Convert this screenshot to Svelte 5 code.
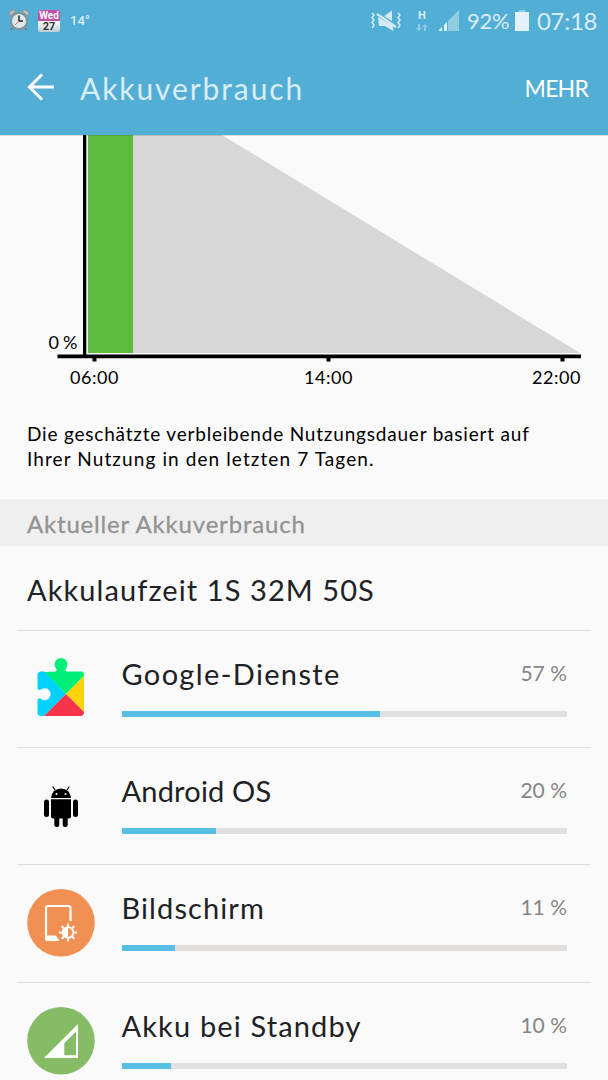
<script lang="ts">
    type Consumer = {
        id: string;
        name: string;
        percent: number;
        fill: number;
        spacing: number;
    };

    const consumers: Consumer[] = [
        { id: 'google', name: 'Google-Dienste', percent: 57, fill: 58.1, spacing: 1.35 },
        { id: 'android', name: 'Android OS', percent: 20, fill: 21.1, spacing: 0.2 },
        { id: 'screen', name: 'Bildschirm', percent: 11, fill: 12.1, spacing: 1.1 },
        { id: 'standby', name: 'Akku bei Standby', percent: 10, fill: 11.1, spacing: 1.15 }
    ];

    const ticks = [
        { x: 94.5, start: 70, label: '06:00' },
        { x: 328.5, start: 304, label: '14:00' },
        { x: 562.5, start: 532, label: '22:00' }
    ];

    const rays = [0, 45, 90, 135, 180, 225, 270, 315];
</script>

<div class="screen">
    <header>
        <div class="status">
            <svg class="alarm" width="20" height="23" viewBox="0 0 20 23">
                <path d="M4 19l-2 2M16 19l2 2" stroke="#777c80" stroke-width="2" />
                <path d="M1 7a4 4 0 0 1 6-5zM19 7a4 4 0 0 0-6-5z" fill="#c7c4bd" stroke="#85898c" stroke-width=".7" />
                <circle cx="10" cy="12" r="8" fill="#dce9ed" stroke="#8b9093" stroke-width="2" />
                <path d="M10 6.5V12h4" fill="none" stroke="#222" stroke-width="1.5" />
                <path d="M10 12l-4 4" stroke="#e06070" stroke-width="1" />
            </svg>
            <div class="calendar">
                <span class="weekday">Wed</span>
                <span class="day">27</span>
            </div>
            <span class="temp">14°</span>
            <svg class="mute" width="32" height="22" viewBox="0 0 32 22" fill="none" stroke="#d5ebf5">
                <path d="M2 3l2 2-2 2.5 2 2.5-2 2.5 2 2.5-2 3M28 3l2 2-2 2.5 2 2.5-2 2.5 2 2.5-2 3" stroke-width="1.4" />
                <path d="M14 6l8-5.5V11zM8 7l15 9v5l-8-5H9z" fill="#d5ebf5" stroke="none" />
                <path d="M7 4l19 13" stroke-width="2.2" />
            </svg>
            <div class="network">
                <span>H</span>
                <svg width="12" height="7" viewBox="0 0 12 7" fill="#91cce5">
                    <path d="M2 0h2v4h2L3 7 0 4h2zM8 7h2V3h2L9 0 6 3h2z" />
                </svg>
            </div>
            <svg class="signal" width="22" height="21" viewBox="0 0 22 21">
                <path d="M10 11L21 0v21H10z" fill="#91cce5" />
                <path d="M1 20l3-3v4H1zM6 15l3-3v9H6z" fill="#e1f1f8" />
            </svg>
            <span class="level">92%</span>
            <svg class="battery" width="14" height="21" viewBox="0 0 14 21">
                <path d="M4 0h6v2H4z" fill="#91cce5" />
                <path d="M0 2h14v19H0z" fill="#e4f1f8" />
            </svg>
            <span class="clock">07:18</span>
        </div>
        <div class="toolbar">
            <svg width="28" height="28" viewBox="0 0 28 28" fill="none" stroke="#fff" stroke-width="3">
                <path d="M15 1.5L2.5 14 15 26.5M2.5 14H27" />
            </svg>
            <h1>Akkuverbrauch</h1>
            <span class="more">MEHR</span>
        </div>
    </header>

    <svg class="chart" width="608" height="265" viewBox="0 135 608 265">
        <path d="M133 135h89L580 353H133z" fill="#d7d7d7" />
        <path d="M88 135h45v218H88z" fill="#5dbb3d" />
        <path d="M83 135h3.3v220H83zM57.5 354.5H581v3.7H57.5z" />
        <path d="M0 135h608v1H0z" fill="#000" opacity=".12" />
        <text x="48.5" y="349" textLength="29">0 %</text>
        {#each ticks as tick}
            <rect x={tick.x - 2} y="358" width="4" height="3.5" />
            <text x={tick.start} y="384" textLength="48.5">{tick.label}</text>
        {/each}
    </svg>

    <p class="note">
        <span>Die geschätzte verbleibende Nutzungsdauer basiert auf</span><br />
        <span class="second">Ihrer Nutzung in den letzten 7 Tagen.</span>
    </p>

    <h2>Aktueller Akkuverbrauch</h2>
    <div class="runtime">Akkulaufzeit 1S 32M 50S</div>

    <ul>
        {#each consumers as item (item.id)}
            <li>
                <svg class="icon" width="68" height="68" viewBox="0 0 68 68">
                    {#if item.id === 'google'}
                        <path d="M17.5 17L39 39l18-18v-1.500a3 3 0 0 0-3-3H39.500c-1.500-.5-1.500-2.500-.2-3.500a6.400 6.400 0 1 0-10.600 0c1.300 1 1.300 3 0 3.500z" fill="#00ef76" />
                        <path d="M17.500 16.500H14a3.500 3.500 0 0 0-3.500 3.500V33c0 2 2 2.500 3.500 1.500a6 6 0 1 1 0 9.500c-1.500-1-3.500-.5-3.500 1.500v12A3.500 3.500 0 0 0 14 61h3L39 39z" fill="#00d2ff" />
                        <path d="M57 21L39 39l18 18z" fill="#ffd20a" />
                        <path d="M39 39L17 61h36.500a3.500 3.500 0 0 0 3.500-4z" fill="#f63448" />
                    {:else if item.id === 'android'}
                        <g transform="translate(0 -6)">
                            <path d="M24 32a10 9.500 0 0 1 20 0z" />
                            <path d="M28 24l-2-3M40 24l2-3" stroke="#000" stroke-width="1.300" stroke-linecap="round" />
                            <circle cx="29.500" cy="28" r="1" fill="#fafafa" />
                            <circle cx="38.500" cy="28" r="1" fill="#fafafa" />
                            <path d="M24 33.200h20V50.500a2 2 0 0 1-2 2H26a2 2 0 0 1-2-2z" />
                            <rect x="17" y="33.500" width="5" height="17.500" rx="2.500" />
                            <rect x="46" y="33.500" width="5" height="17.500" rx="2.500" />
                            <rect x="27.300" y="46" width="5" height="15" rx="2.500" />
                            <rect x="35.700" y="46" width="5" height="15" rx="2.500" />
                        </g>
                    {:else if item.id === 'screen'}
                        <circle cx="34" cy="33.800" r="33.800" fill="#f09052" />
                        <path d="M43.500 32V19a2 2 0 0 0-2-2H21a2 2 0 0 0-2 2v30.500a1.500 1.500 0 0 0 1.500 1.500H31" fill="none" stroke="#fff" stroke-width="2.200" />
                        <path d="M19 46.500h10l3.500 5.500H20z" fill="#fff" />
                        <g stroke="#fff" stroke-width="2">
                            {#each rays as angle}
                                <path d="M41 34.500v3" transform="rotate({angle} 41 43.500)" />
                            {/each}
                            <circle cx="41" cy="43.500" r="5.300" fill="none" stroke-width="1.800" />
                        </g>
                        <path d="M41 38a5.500 5.500 0 0 0 0 11z" fill="#fff" />
                    {:else}
                        <circle cx="34" cy="33.800" r="33.800" fill="#87bc66" />
                        <path d="M51 17v34H17zM49 24.500L37.300 36v12.300H49z" fill="#fff" fill-rule="evenodd" />
                    {/if}
                </svg>
                <div class="details">
                    <div class="line">
                        <span class="name" style="letter-spacing: {item.spacing}px">{item.name}</span>
                        <span class="percent">{item.percent} %</span>
                    </div>
                    <div class="track">
                        <div class="fill" style="width: {item.fill}%"></div>
                    </div>
                </div>
            </li>
        {/each}
    </ul>
</div>

<style>
    :global(body) {
        margin: 0;
        background: #fafafa;
    }

    .screen {
        height: 1080px;
        overflow: hidden;
        background: #fafafa;
        color: #202124;
        font-family: "Choco Cooky", Lato, sans-serif;
    }

    svg {
        display: block;
        flex: none;
    }

    header {
        height: 135px;
        background: #52aed5;
    }

    .status {
        display: flex;
        align-items: center;
        height: 41px;
        padding: 0 10px 0 9px;
        color: #d9edf6;
        white-space: nowrap;
    }

    .calendar {
        display: flex;
        flex-direction: column;
        width: 22px;
        height: 22px;
        margin-left: 9px;
        overflow: hidden;
        border-radius: 2px;
        background: linear-gradient(#d6e8f0, #f5f8fa 60%, #b9cbd2);
        text-align: center;
        font-family: Roboto, sans-serif;
        font-weight: 700;
    }

    .weekday {
        height: 11px;
        background: #c14fa5;
        color: #fff;
        font-size: 10px;
        line-height: 11px;
    }

    .day {
        color: #333;
        font-size: 11px;
        line-height: 11px;
    }

    .temp {
        margin: 0 auto 0 10px;
        font: 500 13px/20px Roboto, sans-serif;
    }

    .network {
        display: flex;
        flex-direction: column;
        align-items: center;
        gap: 3px;
        width: 12px;
        margin-left: 14px;
        font: 700 11px/10px Roboto, sans-serif;
    }

    .signal {
        margin-left: 10px;
    }

    .level {
        width: 43px;
        margin-left: 7px;
        font-size: 22px;
        letter-spacing: -0.2px;
    }

    .battery {
        margin-left: 5px;
    }

    .clock {
        width: 61px;
        margin-left: 8px;
        font-size: 24px;
        letter-spacing: -0.3px;
    }

    .toolbar {
        display: flex;
        align-items: center;
        height: 94px;
        padding: 0 20px 0 27px;
        box-sizing: border-box;
    }

    .toolbar svg {
        margin-bottom: 2px;
    }

    h1 {
        flex: 1;
        margin: 0 0 0 25px;
        color: #d9edf6;
        font-size: 30px;
        font-weight: 400;
        letter-spacing: 1.9px;
    }

    .more {
        margin-bottom: 1px;
        color: #fff;
        font-size: 23px;
        letter-spacing: -0.8px;
    }

    .chart text {
        font-size: 18px;
        fill: #000;
    }

    .note {
        height: 77px;
        margin: 0;
        padding: 22px 0 0 27px;
        color: #000;
        font-size: 19px;
        line-height: 24.500px;
        letter-spacing: 0.8px;
        white-space: nowrap;
    }

    .second {
        letter-spacing: 1.100px;
    }

    h2 {
        height: 47px;
        margin: 0;
        padding-left: 27px;
        background: #efefef;
        color: #939393;
        font-size: 24px;
        font-weight: 400;
        line-height: 49px;
        letter-spacing: 0.8px;
        -webkit-text-stroke: 0.3px #939393;
    }

    .runtime {
        height: 84px;
        padding-left: 27px;
        font-size: 29px;
        line-height: 88px;
        letter-spacing: 1.08px;
    }

    ul {
        margin: 0 17px;
        padding: 0;
        list-style: none;
    }

    li {
        display: flex;
        gap: 27px;
        height: 117.200px;
        padding: 24px 24px 0 9.500px;
        box-sizing: border-box;
        border-top: 1px solid #dcdcdc;
    }

    .details {
        flex: 1;
    }

    .line {
        display: flex;
        justify-content: space-between;
        height: 56px;
    }

    .name {
        font-size: 29px;
        line-height: 37px;
    }

    .percent {
        color: #858585;
        font-size: 21px;
        line-height: 36px;
    }

    .track {
        height: 6px;
        background: #e1e0df;
    }

    .fill {
        height: 100%;
        background: #58bfe4;
    }
</style>
